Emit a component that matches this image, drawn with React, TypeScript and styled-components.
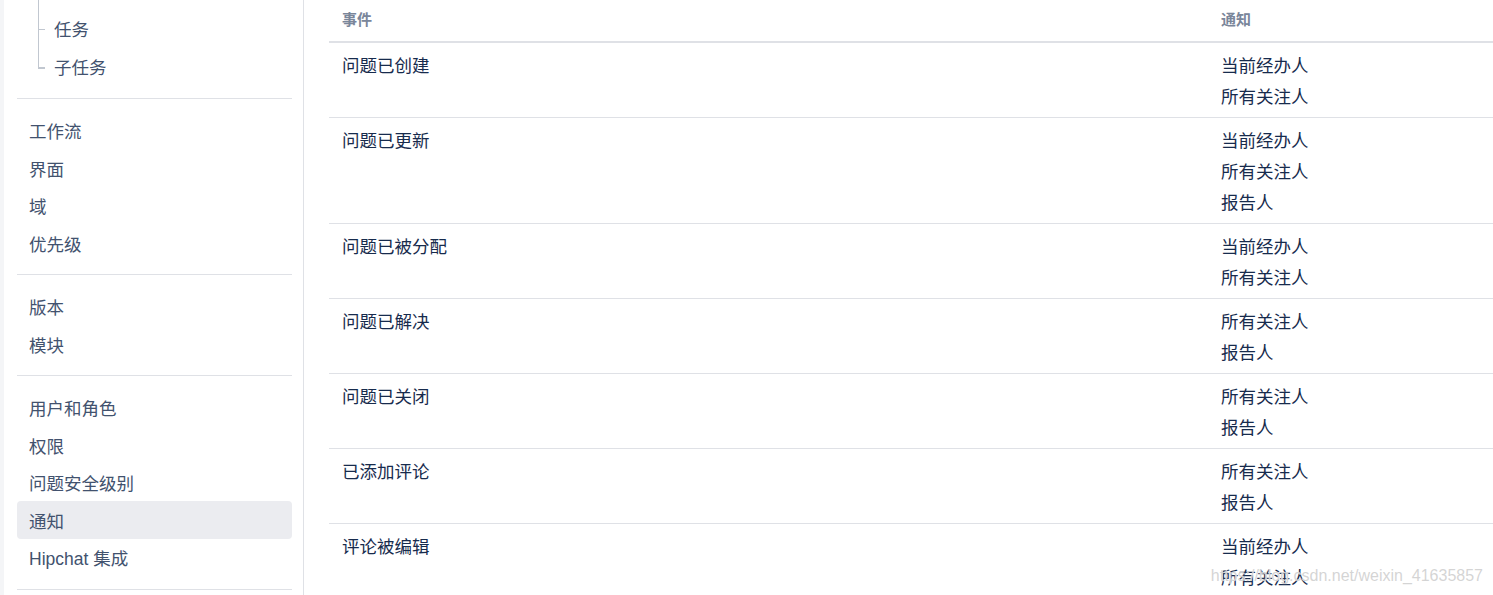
import React from "react";
import styled, { createGlobalStyle } from "styled-components";

const GlobalStyle = createGlobalStyle`
	html, body {
		margin: 0;
		padding: 0;
		background: #ffffff;
	}
	body {
		font-family: "Liberation Sans", "Noto Sans CJK SC", sans-serif;
		color: #172b4d;
		-webkit-font-smoothing: antialiased;
	}
`;

const issueTypes = ["故事", "任务", "子任务"];

const navSections = [
	["工作流", "界面", "域", "优先级"],
	["版本", "模块"],
	["用户和角色", "权限", "问题安全级别", "通知", "Hipchat 集成"],
	[],
];

const events = [
	{ name: "问题已创建", targets: ["当前经办人", "所有关注人"] },
	{ name: "问题已更新", targets: ["当前经办人", "所有关注人", "报告人"] },
	{ name: "问题已被分配", targets: ["当前经办人", "所有关注人"] },
	{ name: "问题已解决", targets: ["所有关注人", "报告人"] },
	{ name: "问题已关闭", targets: ["所有关注人", "报告人"] },
	{ name: "已添加评论", targets: ["所有关注人", "报告人"] },
	{ name: "评论被编辑", targets: ["当前经办人", "所有关注人", "报告人"] },
];

const App = () => {
	return (
		<>
			<GlobalStyle />
			<Page>
				<Gutter />
				<Sidebar>
					<TypeTree>
						{issueTypes.map((type, i) => (
							<TreeItem key={type} last={i === issueTypes.length - 1}>
								{type}
							</TreeItem>
						))}
					</TypeTree>
					{navSections.map((section, i) => (
						<NavSection key={i}>
							{section.map((item) => (
								<NavItem key={item} active={item === "通知"}>
									{item}
								</NavItem>
							))}
						</NavSection>
					))}
				</Sidebar>
				<Main>
					<Table>
						<thead>
							<tr>
								<HeadCell style={{ width: 879 }}>事件</HeadCell>
								<HeadCell>通知</HeadCell>
							</tr>
						</thead>
						<tbody>
							{events.map((event) => (
								<Row key={event.name}>
									<Cell>{event.name}</Cell>
									<Cell>
										{event.targets.map((target) => (
											<Target key={target}>{target}</Target>
										))}
									</Cell>
								</Row>
							))}
						</tbody>
					</Table>
				</Main>
				<Watermark>https://blog.csdn.net/weixin_41635857</Watermark>
			</Page>
		</>
	);
};

const Page = styled.div`
	position: relative;
	display: flex;
	height: 595px;
	overflow: hidden;
`;

const Gutter = styled.div`
	flex: 0 0 4px;
	background: #f4f5f7;
`;

const Sidebar = styled.nav`
	flex: 0 0 300px;
	box-sizing: border-box;
	padding: 0 11px 0 13px;
	border-right: 1px solid #dfe1e6;
	color: #42526e;
	font-size: 17.5px;
`;

const TypeTree = styled.ul`
	list-style: none;
	margin: -30.5px 0 0 21px;
	padding: 0 0 14.5px;
`;

const TreeItem = styled.li<{ last?: boolean }>`
	position: relative;
	box-sizing: border-box;
	height: 38px;
	padding: 6px 0 0 16px;
	line-height: 32px;

	&::before {
		content: "";
		position: absolute;
		left: 0;
		top: 0;
		height: ${(p) => (p.last ? "56%" : "100%")};
		border-left: 1px solid #c1c7d0;
	}

	&::after {
		content: "";
		position: absolute;
		left: 0;
		top: 56%;
		width: 7px;
		border-top: ${(p) => (p.last ? "2px" : "1px")} solid #c1c7d0;
	}
`;

const NavSection = styled.div`
	border-top: 1px solid #dfe1e6;
	padding: 12.5px 0;
`;

const NavItem = styled.div<{ active?: boolean }>`
	box-sizing: border-box;
	height: 37.5px;
	padding: 4.5px 12px 0;
	line-height: 33px;
	border-radius: 4px;
	background: ${(p) => (p.active ? "#ebecf0" : "transparent")};
	white-space: nowrap;
`;

const Main = styled.main`
	flex: 1;
	padding-left: 25px;
	min-width: 0;
`;

const Table = styled.table`
	width: 100%;
	border-collapse: collapse;
	table-layout: fixed;
`;

const HeadCell = styled.th`
	box-sizing: border-box;
	height: 42px;
	padding: 0 13px 4px;
	text-align: left;
	font-size: 15px;
	font-weight: 700;
	color: #7a869a;
	border-bottom: 2px solid #dfe1e6;
	vertical-align: middle;
`;

const Row = styled.tr`
	border-bottom: 1px solid #dfe1e6;
`;

const Cell = styled.td`
	padding: 8px 13px 4px;
	vertical-align: top;
	font-size: 17.5px;
	line-height: 31px;
	color: #172b4d;
`;

const Target = styled.div`
	white-space: nowrap;
`;

const Watermark = styled.div`
	position: absolute;
	right: 10px;
	bottom: 10px;
	font-family: "Liberation Sans", sans-serif;
	font-size: 16px;
	color: rgba(205, 205, 205, 0.85);
	text-shadow: 0 0 1px rgba(255, 255, 255, 0.9);
	pointer-events: none;
`;

export default App;
